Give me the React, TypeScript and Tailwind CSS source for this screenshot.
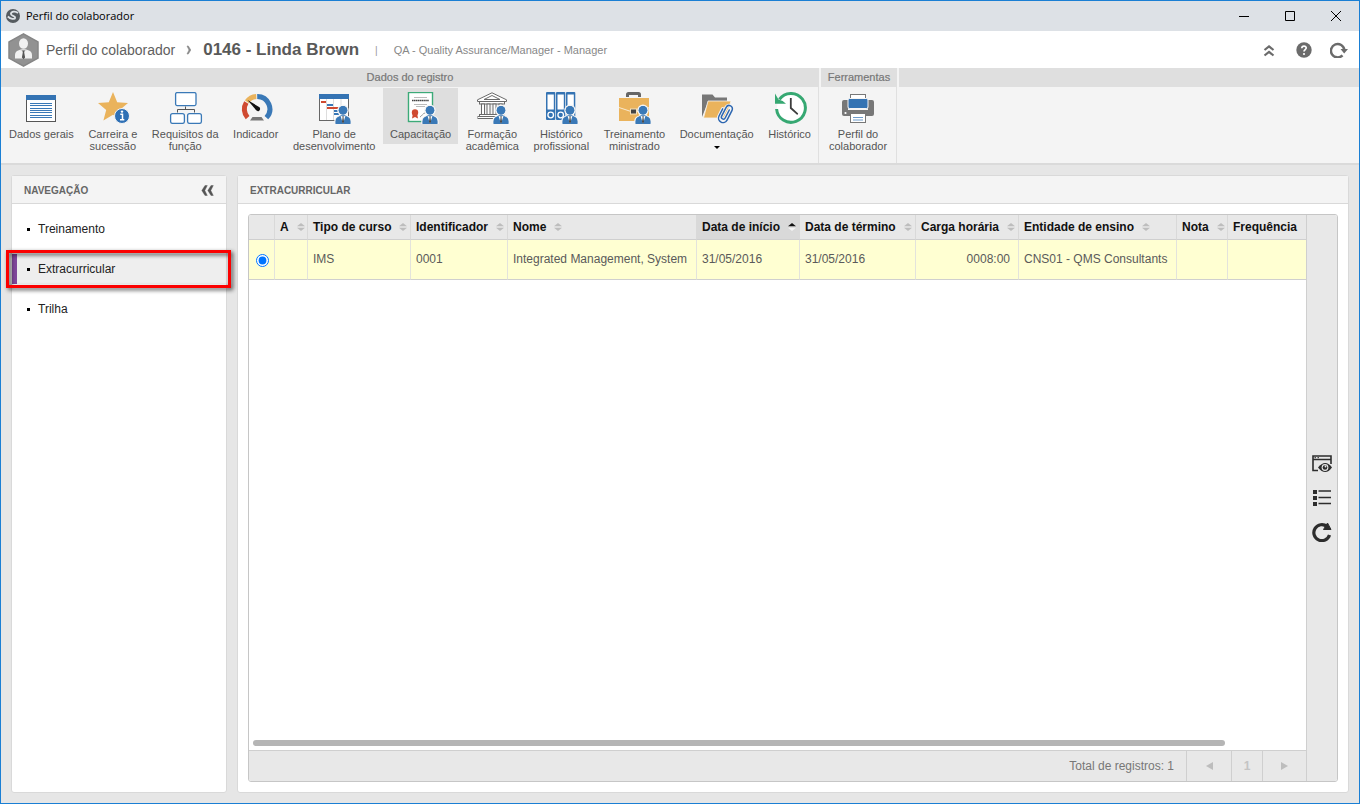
import React from "react";

type IconProps = { children: React.ReactNode };

function RibbonIcon({ children }: IconProps) {
  return (
    <svg viewBox="0 0 36 32" className="h-8 w-9 shrink-0" fill="none" aria-hidden="true">
      {children}
    </svg>
  );
}

function Person() {
  return (
    <g>
      <g fill="#3a79b7" stroke="#f4f4f4" strokeWidth="1.600">
        <path d="M19 32v-2.500q0-4 4-5.300l2-1h4l2 1q4 1.300 4 5.300V32z" />
        <circle cx="27" cy="18.300" r="5" />
      </g>
      <path d="M19.500 31.900v-2.400q0-4 3.500-5l2-1.200h4l2 1.200q3.500 1 3.500 5v2.400z" fill="#3a79b7" />
      <circle cx="27" cy="18.300" r="4.300" fill="#3a79b7" />
      <path d="M24.500 23.800l2.500 8 2.500-8-1.300.5h-2.400z" fill="#fff" />
      <path d="M26.400 24.300h1.300l-.2 1.500.5 4-1 2-1-2 .6-4z" fill="#444" />
    </g>
  );
}

function DataIcon() {
  return (
    <RibbonIcon>
      <rect x="3.500" y="3.500" width="29" height="26" fill="#fff" stroke="#555" />
      <rect x="3" y="3" width="30" height="5" fill="#3473b3" />
      <path d="M7 11.500h22M7 13.500h22M7 16.500h22M7 18.500h22M7 20.500h22M7 23.500h22M7 25.500h22" stroke="#3a79b7" />
    </RibbonIcon>
  );
}

function CareerIcon() {
  return (
    <RibbonIcon>
      <path d="M18 0l4.200 10.200 10.800.8-8.300 7 2.600 10.500L18 22.800 8.400 28.500 11.200 18 3 11l10.800-.8z" fill="#eab35c" />
      <circle cx="27" cy="24" r="7.500" fill="#2f70b5" stroke="#f4f4f4" />
      <path d="M25.300 22.300h2.200v5.200M25 27.700h4.300" stroke="#fff" strokeWidth="1.500" />
      <circle cx="27" cy="19.600" r="1.200" fill="#fff" />
    </RibbonIcon>
  );
}

function OrgIcon() {
  return (
    <RibbonIcon>
      <g fill="#fff" stroke="#3a79b7" strokeWidth="1.300">
        <rect x="8.600" y=".6" width="20.400" height="13" rx="1.500" />
        <rect x="3.600" y="21.600" width="13.800" height="9.800" rx="2" />
        <rect x="20.600" y="21.600" width="13.800" height="9.800" rx="2" />
      </g>
      <path d="M18.500 14.500v3M10.500 20.500v-3h17v3" stroke="#555" />
    </RibbonIcon>
  );
}

function GaugeIcon() {
  return (
    <RibbonIcon>
      <g strokeWidth="5">
        <path d="M9.600 25.600A12.500 12.500 0 0 1 8.300 10.500" stroke="#d04a31" />
        <path d="M8.900 9.700A12.500 12.500 0 0 1 18.300 4.500" stroke="#eab35c" />
        <path d="M19.200 4.500A12.500 12.500 0 0 1 28.400 25.600" stroke="#3a79b7" />
      </g>
      <path d="M9.500 8l12 7.200c1 .9.700 3-.6 3.700-1 .5-2 .2-2.700-.6z" fill="#111" />
      <path d="M14.500 25h9l2.500 3.500H12z" fill="#777" />
    </RibbonIcon>
  );
}

function PlanIcon() {
  return (
    <RibbonIcon>
      <rect x="3.500" y="2.500" width="29" height="26" fill="#fff" stroke="#666" />
      <path d="M10.500 7v21M17.500 7v21M25 7v21" stroke="#ddd" />
      <rect x="3" y="2" width="30" height="5" fill="#3473b3" />
      <path d="M5 10h5M11 16h12" stroke="#d04a31" strokeWidth="2" />
      <path d="M11 13h6M18 19h5M18 22h5" stroke="#3a79b7" strokeWidth="2" />
      <Person />
    </RibbonIcon>
  );
}

function CertificateIcon() {
  return (
    <RibbonIcon>
      <rect x="5.500" y=".5" width="24" height="29" fill="#fff" stroke="#3caa78" strokeWidth="1.400" />
      <path d="M11 5.500h13M11 12.500h13M13 14.500h9" stroke="#bbb" />
      <path d="M9 8.500h17" stroke="#444" strokeWidth="1.600" strokeDasharray="1.500 .4" />
      <path d="M10 21l-1 5.500 3-1.500 3 1.500-1-5.500z" fill="#d04a31" />
      <circle cx="12" cy="20.500" r="3.200" fill="#d04a31" />
      <path d="M17 25c2-1 3-4 5-4" stroke="#999" />
      <Person />
    </RibbonIcon>
  );
}

function AcademyIcon() {
  return (
    <RibbonIcon>
      <g fill="#fff" stroke="#6a6a6a">
        <path d="M3.500 9.500V7.800L18 .8l14.500 7v1.700z" />
        <path d="M10 7.500l8-4 8 4z" />
        <rect x="5.500" y="9.500" width="25" height="2.500" />
        <rect x="7.500" y="12" width="3" height="11" />
        <rect x="13" y="12" width="3" height="11" />
        <rect x="19" y="12" width="3" height="11" />
        <rect x="25" y="12" width="3" height="11" />
        <rect x="5.500" y="22.500" width="25" height="2" />
        <rect x="4" y="24.500" width="28" height="2" />
      </g>
      <Person />
    </RibbonIcon>
  );
}

function BindersIcon() {
  return (
    <RibbonIcon>
      {[3, 13, 23].map((x) => (
        <g key={x}>
          <rect x={x} y="0" width="9.300" height="28" rx="1" fill="#3473b3" />
          <rect x={x + 1.5} y="2.500" width="6.300" height="15" fill="#fff" />
          <circle cx={x + 4.7} cy="23" r="2.800" fill="#3473b3" stroke="#fff" strokeWidth="1.300" />
        </g>
      ))}
      <Person />
    </RibbonIcon>
  );
}

function BriefcaseIcon() {
  return (
    <RibbonIcon>
      <path d="M11.500 5V2.500q0-1 1-1h10q1 0 1 1V5" stroke="#666" strokeWidth="3" />
      <rect x="3" y="6" width="30" height="23" fill="#eab35c" />
      <path d="M3 15.500l12 4h6l12-4" stroke="#f8ead0" />
      <rect x="14.500" y="17" width="6" height="5" fill="#444" stroke="#f4e1bd" />
      <Person />
    </RibbonIcon>
  );
}

function FolderIcon() {
  return (
    <RibbonIcon>
      <path d="M3 25V2.500h10.500l2.500 3h12V10H9z" fill="#777" />
      <path d="M9 9h23l-5 17H4.500z" fill="#eab35c" stroke="#f4f4f4" strokeWidth=".8" />
      <g transform="rotate(27 26 22)" strokeLinecap="round">
        <path d="M28 16.500v9a2 2 0 0 1-4 0V15.500a3.300 3.300 0 0 1 6.600 0v11a4.500 4.500 0 0 1-9 0v-8" stroke="#f4f4f4" strokeWidth="3.400" />
        <path d="M28 16.500v9a2 2 0 0 1-4 0V15.500a3.300 3.300 0 0 1 6.600 0v11a4.500 4.500 0 0 1-9 0v-8" stroke="#2c66b0" strokeWidth="1.500" />
      </g>
    </RibbonIcon>
  );
}

function HistoryIcon() {
  return (
    <RibbonIcon>
      <circle cx="19" cy="16" r="14" fill="#fff" />
      <path d="M4.600 17A14.400 14.400 0 1 0 7.400 7.300" stroke="#36a872" strokeWidth="3" />
      <path d="M3 1.500v10.300h11l-3.300-2.800-4.200-1.500z" fill="#36a872" />
      <path d="M17.900 6h1.800v9.600l6.500 6-.9 1.300-7.400-6.400z" fill="#3d3d3d" />
    </RibbonIcon>
  );
}

function PrinterIcon() {
  return (
    <RibbonIcon>
      <rect x="10.500" y="2.500" width="15" height="8" fill="#fff" stroke="#777" />
      <path d="M4 8h4v10h20V8h4q2 0 2 2v12q0 2-2 2H4q-2 0-2-2V10q0-2 2-2z" fill="#777" />
      <rect x="8" y="6.500" width="20" height="10" rx="1.500" fill="#3473b3" stroke="#f4f4f4" />
      <rect x="10.500" y="21.500" width="15" height="9" fill="#fff" stroke="#777" />
      <path d="M13 25.500h10M13 28h10" stroke="#6d9bcb" />
      <circle cx="5.500" cy="21" r="1.100" fill="#fff" />
    </RibbonIcon>
  );
}

type Tool = { label: [string, string?]; icon: () => React.JSX.Element; active?: boolean; menu?: boolean };

const recordTools: Tool[] = [
  { label: ["Dados gerais"], icon: DataIcon },
  { label: ["Carreira e", "sucessão"], icon: CareerIcon },
  { label: ["Requisitos da", "função"], icon: OrgIcon },
  { label: ["Indicador"], icon: GaugeIcon },
  { label: ["Plano de", "desenvolvimento"], icon: PlanIcon },
  { label: ["Capacitação"], icon: CertificateIcon, active: true },
  { label: ["Formação", "acadêmica"], icon: AcademyIcon },
  { label: ["Histórico", "profissional"], icon: BindersIcon },
  { label: ["Treinamento", "ministrado"], icon: BriefcaseIcon },
  { label: ["Documentação"], icon: FolderIcon, menu: true },
  { label: ["Histórico"], icon: HistoryIcon },
];

const fileTools: Tool[] = [{ label: ["Perfil do", "colaborador"], icon: PrinterIcon }];

function ToolButton({ label, icon: Icon, active, menu }: Tool) {
  return (
    <button
      type="button"
      className={
        "flex flex-col items-center gap-1 px-[7px] py-1 text-[11px] leading-3 whitespace-nowrap text-[#555] " +
        (active ? "bg-[#dedede]" : "")
      }
    >
      <Icon />
      <span className="flex flex-col items-center">
        <span>{label[0]}</span>
        {label[1] && <span>{label[1]}</span>}
        {menu && (
          <svg viewBox="0 0 6 12" className="h-3 w-[6px]" aria-hidden="true">
            <path d="M0 6h6L3 9z" fill="#000" />
          </svg>
        )}
      </span>
    </button>
  );
}

function ToolGroup({ title, tools, className }: { title: string; tools: Tool[]; className: string }) {
  return (
    <section className={"flex flex-col " + className}>
      <h2 className="mr-[2px] flex h-[19px] items-center justify-center bg-[#dfdfdf] text-[11px] font-normal text-[#777] [-webkit-text-stroke:0.2px_#777]">
        {title}
      </h2>
      <div className="mr-[2px] flex flex-1 items-start justify-between border-r border-[#e0e0e0] pt-px pl-px">
        {tools.map((t) => (
          <ToolButton key={t.label.join(" ")} {...t} />
        ))}
      </div>
    </section>
  );
}

type Column = { title: string; width: string; sort?: "none" | "asc"; value?: string; right?: boolean };

const columns: Column[] = [
  { title: "A", width: "w-[33px]", sort: "none" },
  { title: "Tipo de curso", width: "w-[103px]", sort: "none", value: "IMS" },
  { title: "Identificador", width: "w-[97px]", sort: "none", value: "0001" },
  { title: "Nome", width: "w-[189px]", sort: "none", value: "Integrated Management, System" },
  { title: "Data de início", width: "w-[103px]", sort: "asc", value: "31/05/2016" },
  { title: "Data de término", width: "w-[116px]", sort: "none", value: "31/05/2016" },
  { title: "Carga horária", width: "w-[103px]", sort: "none", value: "0008:00", right: true },
  { title: "Entidade de ensino", width: "w-[158px]", sort: "none", value: "CNS01 - QMS Consultants" },
  { title: "Nota", width: "w-[51px]", sort: "none" },
  { title: "Frequência", width: "" },
];

function SortMark({ asc }: { asc: boolean }) {
  return (
    <svg viewBox="0 0 8 8" className="h-2 w-2 shrink-0" aria-hidden="true">
      <path d="M0 3.300h8L4 0z" fill={asc ? "#111" : "#bdbdbd"} />
      <path d="M0 4.700h8L4 8z" fill={asc ? "#f4f4f4" : "#bdbdbd"} />
    </svg>
  );
}

function CourseTable() {
  return (
    <table className="w-full table-fixed border-separate border-spacing-0 text-[12px]">
      <colgroup>
        <col className="w-[26px]" />
        {columns.map((c) => (
          <col key={c.title} className={c.width} />
        ))}
      </colgroup>
      <thead>
        <tr className="h-[25px] bg-[#e8e8e8] text-[#111]">
          <td className="border-r border-b border-r-[#d9d9d9] border-b-[#cfcfcf] p-0" />
          {columns.map((c) => (
            <th
              key={c.title}
              scope="col"
              className={
                "border-r border-b border-r-[#d9d9d9] border-b-[#cfcfcf] p-0 pl-[5px] font-bold whitespace-nowrap last:border-r-0 " +
                (c.sort === "asc" ? "bg-[#d9d9d9]" : "")
              }
            >
              <button type="button" className="flex items-center gap-2">
                <span>{c.title}</span>
                {c.sort && <SortMark asc={c.sort === "asc"} />}
              </button>
            </th>
          ))}
        </tr>
      </thead>
      <tbody>
        <tr className="h-10 bg-[#ffffd2] text-[#5a5a5a]">
          <td className="border-r border-b border-r-[#e3e3dc] border-b-[#cfcfcf] p-0 pt-[2px] pl-px">
            <input
              type="radio"
              name="course"
              defaultChecked
              aria-label="Integrated Management, System"
              className="mx-auto block size-[13px] accent-[#0075ff]"
            />
          </td>
          {columns.map((c) => (
            <td
              key={c.title}
              className={
                "border-r border-b border-r-[#e3e3dc] border-b-[#cfcfcf] p-0 pb-[2px] pl-[5px] whitespace-nowrap last:border-r-0 " +
                (c.right ? "pr-2 text-right" : "")
              }
            >
              {c.value}
            </td>
          ))}
        </tr>
      </tbody>
    </table>
  );
}

function TitleBar() {
  return (
    <div className="flex h-[30px] items-center bg-[#dde1e6] pr-[18px] pl-[5px]">
      <svg viewBox="0 0 14 14" className="size-[14px]" aria-hidden="true">
        <circle cx="7" cy="7" r="7" fill="#555b60" />
        <path d="M12 4C9.500 1.800 5.200 2.300 4.900 4.800 4.700 7 9.500 6.600 9.200 8.800 8.800 10.800 4.500 10 1.800 7.500" fill="none" stroke="#dde1e6" strokeWidth="1.800" />
      </svg>
      <span className="pl-[6px] font-['Open_Sans',sans-serif] text-[11px] text-black">Perfil do colaborador</span>
      <div className="ml-auto flex items-center gap-9">
        <button type="button" aria-label="Minimizar">
          <svg viewBox="0 0 10 10" className="size-[10px]"><path d="M0 5.500h10" stroke="#000" /></svg>
        </button>
        <button type="button" aria-label="Maximizar">
          <svg viewBox="0 0 10 10" className="size-[10px]"><path d="M.5.5h9v9h-9z" fill="none" stroke="#000" /></svg>
        </button>
        <button type="button" aria-label="Fechar">
          <svg viewBox="0 0 10 10" className="size-[10px]"><path d="M0 0l10 10M10 0L0 10" stroke="#000" /></svg>
        </button>
      </div>
    </div>
  );
}

function PageHeader() {
  return (
    <header className="flex h-[37px] items-center pr-[11px] pl-[7px] text-[#5f5f5f]">
      <svg viewBox="0 0 31 34" className="h-[34px] w-[31px]" aria-hidden="true">
        <path d="M15.500.8L30 8.800v16.400l-14.500 8L1 25.200V8.800z" fill="#929292" stroke="#868686" strokeLinejoin="round" strokeWidth="1.500" />
        <path d="M7 25.500v-3.500c0-2.800 1.500-4.200 4.500-5l2-.8h4l2 .8c3 .8 4.500 2.200 4.500 5v3.500z" fill="#f1f1f1" />
        <ellipse cx="15.500" cy="10.500" rx="4.500" ry="5.300" fill="#f1f1f1" />
        <path d="M12 16.500l3.500 1.300 3.500-1.300" fill="none" stroke="#b5b5b5" strokeWidth=".8" />
        <path d="M14.300 17.500h2.400l-.5 2 .9 5-1.600 1.700-1.600-1.700.9-5z" fill="#555" />
      </svg>
      <span className="pt-[2px] pl-[7px] text-[14px]">Perfil do colaborador</span>
      <svg viewBox="0 0 6 10" className="mx-[11px] h-[10px] w-[6px]" aria-hidden="true">
        <path d="M1 1h1.300l2.500 4-2.500 4H1l2-4z" fill="#888" stroke="#888" strokeWidth=".6" />
      </svg>
      <h1 className="text-[17px] font-bold text-[#595959]">0146 - Linda Brown</h1>
      <span className="pt-[2px] pl-4 text-[10px] text-[#999]">|</span>
      <span className="pt-[2px] pl-4 text-[11px] text-[#888]">QA - Quality Assurance/Manager - Manager</span>
      <div className="ml-auto flex items-center gap-[18px] text-[#6b6b6b]">
        <button type="button" aria-label="Recolher">
          <svg viewBox="-1 -2 16 16" className="size-4" fill="none" stroke="currentColor" strokeWidth="2.200">
            <path d="M1.500 6L6 2.300 10.500 6M1.500 11.500L6 7.800l4.500 3.700" />
          </svg>
        </button>
        <button type="button" aria-label="Ajuda">
          <svg viewBox="0 0 16 16" className="size-4">
            <circle cx="8" cy="8" r="7.700" fill="currentColor" />
            <path d="M5.800 6.200C5.900 3.200 10.300 3.500 10.200 6 10.100 7.500 8 7.700 8 9.500" fill="none" stroke="#fff" strokeWidth="1.700" />
            <circle cx="8" cy="12" r="1.100" fill="#fff" />
          </svg>
        </button>
        <button type="button" aria-label="Atualizar">
          <svg viewBox="0 0 18 16" className="h-4 w-[18px]">
            <path d="M12.500 13.300A6.700 6.700 0 1 1 14.300 8" fill="none" stroke="currentColor" strokeWidth="2.500" />
            <path d="M10.500 7h7.500L14.200 11.500z" fill="currentColor" />
          </svg>
        </button>
      </div>
    </header>
  );
}

function Navigation() {
  const items = ["Treinamento", "Extracurricular", "Trilha"];
  return (
    <nav className="flex w-[216px] shrink-0 flex-col rounded-[3px] border border-[#d9d9d9] bg-white">
      <div className="flex h-7 shrink-0 items-center justify-between border-b border-[#d9d9d9] bg-[#f4f4f4] px-3 pt-px text-[#666]">
        <h2 className="text-[10px] font-bold">NAVEGAÇÃO</h2>
        <button type="button" aria-label="Recolher navegação">
          <svg viewBox="0 0 13 11" className="h-[11px] w-[13px]">
            <path d="M4 .5h2.300L3.800 5.500l2.500 5H4L.8 5.500zM10 .5h2.300L9.800 5.500l2.500 5H10L6.800 5.500z" fill="#555" stroke="#555" strokeWidth=".4" />
          </svg>
        </button>
      </div>
      <ul className="flex flex-col gap-[10px] pt-[10px] text-[12px] text-[#222]">
        {items.map((item, i) => (
          <li key={item} className="relative">
            <a
              href="#"
              className={
                "flex h-[30px] items-center gap-2 border-l-[5px] pl-[10px] " +
                (i === 1 ? "border-[#80479b] bg-[#eee]" : "border-transparent")
              }
            >
              <span className="size-[3px] bg-black" />
              {item}
            </a>
            {i === 1 && (
              <div className="pointer-events-none absolute -top-1 -right-[5px] -bottom-1 -left-[6px] border-[3px] border-[#fb0000] drop-shadow-[2px_2px_2px_rgba(0,0,0,0.7)]" />
            )}
          </li>
        ))}
      </ul>
    </nav>
  );
}

function SideTools() {
  return (
    <div className="flex w-[31px] shrink-0 flex-col items-center justify-center gap-[14px] border-l border-[#cfcfcf] bg-[#e8e8e8] text-[#2d2d2d]">
      <button type="button" aria-label="Visualizar">
        <svg viewBox="0 0 20 20" className="size-5" fill="none">
          <path d="M6 16.500H1V2h18v8M1 5.500h18" stroke="currentColor" strokeWidth="1.600" />
          <path d="M2.500 3.700h1.500M5.500 3.700h1.500" stroke="currentColor" />
          <path d="M6 13.500q3.500-4.500 7.200-4.500t6.800 4.500q-3.300 4.500-6.800 4.500t-7.200-4.500z" fill="currentColor" />
          <circle cx="13" cy="13.500" r="3.400" fill="#e8e8e8" />
          <circle cx="13" cy="13.500" r="2.300" fill="currentColor" />
          <circle cx="13.500" cy="12.500" r=".9" fill="#e8e8e8" />
        </svg>
      </button>
      <button type="button" aria-label="Lista">
        <svg viewBox="0 0 20 20" className="size-5">
          <path d="M1 2h4v4H1zM1 8h4v4H1zM1 14h4v4H1z" fill="currentColor" />
          <path d="M6.500 3h12.500M6.500 9.500h12.500M6.500 15.500h12.500" stroke="currentColor" strokeWidth="1.500" />
        </svg>
      </button>
      <button type="button" aria-label="Recarregar">
        <svg viewBox="0 0 20 20" className="size-5">
          <path d="M17.500 13A8 8 0 1 1 15 4.500" fill="none" stroke="currentColor" strokeWidth="3.200" />
          <path d="M15.500 1L19 7.500h-7.500z" fill="currentColor" stroke="currentColor" />
        </svg>
      </button>
    </div>
  );
}

function Pager() {
  return (
    <footer className="flex h-[31px] shrink-0 justify-end border-t border-[#cfcfcf] bg-[#e8e8e8] text-[12px] text-[#777]">
      <span className="flex items-center pr-3">Total de registros: 1</span>
      <button type="button" aria-label="Página anterior" className="flex w-[45px] items-center justify-center border-l border-[#cfcfcf]">
        <svg viewBox="0 0 7 8" className="h-2 w-[7px]"><path d="M7 0v8L0 4z" fill="#bdbdbd" /></svg>
      </button>
      <button type="button" className="flex w-[31px] items-center justify-center border-l border-[#cfcfcf] font-bold text-[#c4c4c4]">1</button>
      <button type="button" aria-label="Próxima página" className="flex w-11 items-center justify-center border-l border-[#cfcfcf]">
        <svg viewBox="0 0 7 8" className="h-2 w-[7px]"><path d="M0 0v8l7-4z" fill="#bdbdbd" /></svg>
      </button>
    </footer>
  );
}

export default function App() {
  return (
    <div className="flex min-h-screen flex-col border border-[#1a7fd4] bg-white font-['Liberation_Sans',Arial,sans-serif]">
      <TitleBar />
      <PageHeader />
      <div className="flex h-[97px] shrink-0 border-b-2 border-[#dadada] bg-[#f4f4f4]">
        <ToolGroup title="Dados do registro" tools={recordTools} className="min-w-[820px]" />
        <ToolGroup title="Ferramentas" tools={fileTools} className="min-w-[78px]" />
        <div className="h-[19px] flex-1 bg-[#dfdfdf]" />
      </div>
      <main className="flex flex-1 gap-[10px] bg-[#e6e6e6] p-[10px]">
        <Navigation />
        <section className="flex min-w-0 flex-1 flex-col rounded-[3px] border border-[#d9d9d9] bg-white">
          <h2 className="flex h-7 shrink-0 items-center border-b border-[#d9d9d9] bg-[#f4f4f4] pt-px pl-3 text-[10px] font-bold text-[#666]">
            EXTRACURRICULAR
          </h2>
          <div className="m-[10px] flex flex-1 overflow-hidden rounded-[3px] border border-[#c6c6c6]">
            <div className="flex min-w-0 flex-1 flex-col">
              <CourseTable />
              <div className="mt-auto px-1 pb-1">
                <div className="h-[6px] w-[92.7%] rounded-full bg-[#b5b5b5]" />
              </div>
              <Pager />
            </div>
            <SideTools />
          </div>
        </section>
      </main>
    </div>
  );
}
